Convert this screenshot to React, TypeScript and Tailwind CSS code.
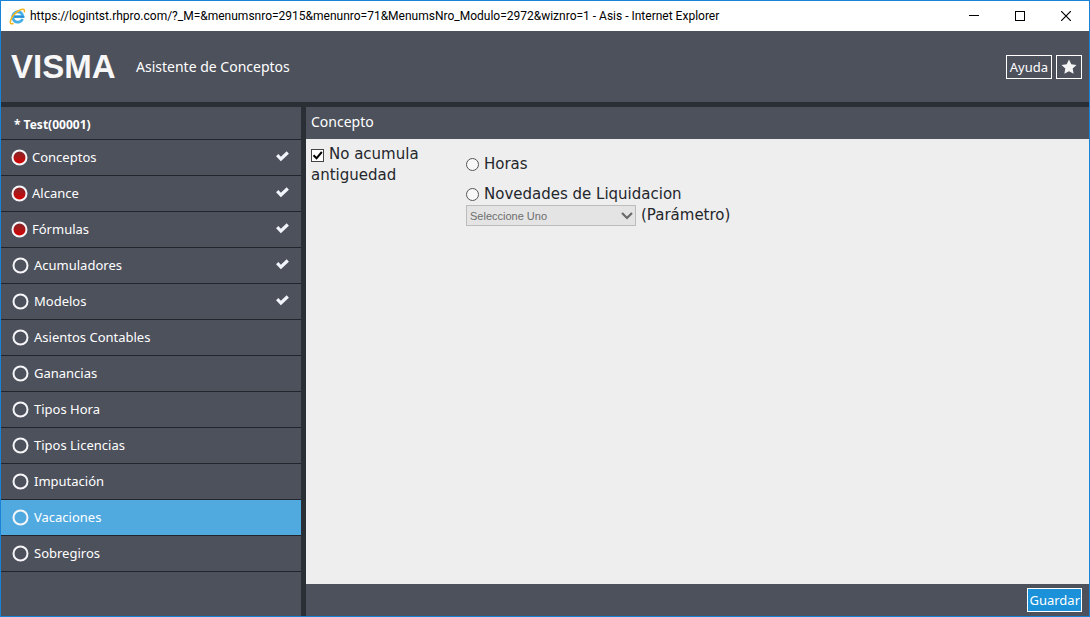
import { useState } from 'react';

interface Step {
  label: string;
  required?: boolean;
  done?: boolean;
}

const steps: Step[] = [
  { label: 'Conceptos', required: true, done: true },
  { label: 'Alcance', required: true, done: true },
  { label: 'Fórmulas', required: true, done: true },
  { label: 'Acumuladores', done: true },
  { label: 'Modelos', done: true },
  { label: 'Asientos Contables' },
  { label: 'Ganancias' },
  { label: 'Tipos Hora' },
  { label: 'Tipos Licencias' },
  { label: 'Imputación' },
  { label: 'Vacaciones' },
  { label: 'Sobregiros' },
];

function BrowserIcon() {
  return (
    <svg width="17" height="17" viewBox="0 0 17 17" fill="none" aria-hidden="true">
      <path d="M13.6 11A5.200 5.200 0 1 1 14 8.700H5" stroke="#45aee6" strokeWidth="2.8" />
      <path d="M5 8.700h10.200" stroke="#2b8fd2" strokeWidth="1.8" />
      <path
        d="M4.500 15.300c-2.500 1.200-3.900.2-2.800-3C2.900 8.600 7 4 11 2c3.300-1.600 5.200-.8 4.200 2.400"
        stroke="#f3b61f"
        strokeWidth="1.5"
      />
    </svg>
  );
}

function StepDot({ required }: { required?: boolean }) {
  return (
    <svg width="17" height="17" viewBox="0 0 17 17" aria-hidden="true" className="shrink-0">
      <defs>
        <linearGradient id="dot-red" x1="0" y1="0" x2="0" y2="1">
          <stop offset="0" stopColor="#7e2a2e" />
          <stop offset="1" stopColor="#dd0000" />
        </linearGradient>
      </defs>
      <circle
        cx="8.5"
        cy="8.5"
        r="7"
        fill={required ? 'url(#dot-red)' : 'none'}
        stroke="#f6f6f8"
        strokeWidth="2"
      />
    </svg>
  );
}

function TitleBar() {
  return (
    <div className="flex h-[30px] shrink-0 items-center bg-white pl-2 text-black">
      <BrowserIcon />
      <p className="ml-1 flex-1 truncate font-['Roboto',sans-serif] text-[12px]">
        https://logintst.rhpro.com/?_M=&amp;menumsnro=2915&amp;menunro=71&amp;MenumsNro_Modulo=2972&amp;wiznro=1 - Asis - Internet Explorer
      </p>
      <div className="flex h-full">
        <button aria-label="Minimizar" className="flex w-[46px] items-center justify-center">
          <svg width="10" height="10" viewBox="0 0 10 10" shapeRendering="crispEdges">
            <path d="M0 4.5h10" stroke="#000" />
          </svg>
        </button>
        <button aria-label="Maximizar" className="flex w-[46px] items-center justify-center">
          <svg width="10" height="10" viewBox="0 0 10 10">
            <rect x="0.5" y="0.5" width="9" height="9" fill="none" stroke="#000" />
          </svg>
        </button>
        <button aria-label="Cerrar" className="flex w-[46px] items-center justify-center">
          <svg width="10" height="10" viewBox="0 0 10 10">
            <path d="M0 0l10 10M10 0L0 10" stroke="#000" strokeWidth="1.2" />
          </svg>
        </button>
      </div>
    </div>
  );
}

function Header() {
  return (
    <header className="flex h-[71px] shrink-0 items-center pr-[7px] pl-[10px] text-white">
      <p className="w-[125px] font-['Liberation_Sans',sans-serif] text-[33px] leading-10 font-bold text-[#f7f7f8]">
        VISMA
      </p>
      <h1 className="flex-1 font-['Noto_Sans',sans-serif] text-[14px]">Asistente de Conceptos</h1>
      <div className="flex gap-1">
        <button className="h-6 border border-white px-[3px] font-['Noto_Sans',sans-serif] text-[13px] leading-5">
          Ayuda
        </button>
        <button aria-label="Favoritos" className="flex h-6 w-[26px] items-center justify-center border border-white">
          <svg width="16" height="16" viewBox="0 0 16 16" fill="#f4f4f4">
            <path d="M8 .5l2.3 4.8 5.2.7-3.8 3.6.9 5.2L8 12.3l-4.6 2.5.9-5.2L.5 6l5.2-.7z" />
          </svg>
        </button>
      </div>
    </header>
  );
}

function Sidebar({ active, onSelect }: { active: string; onSelect: (label: string) => void }) {
  return (
    <aside className="w-[300px] shrink-0 bg-[#4d515c] font-['Noto_Sans',sans-serif] text-[13px] text-white">
      <p className="flex h-[33px] items-center border-b border-[#22252b] pt-1 pl-[13px] text-[12px] font-bold">
        * Test(00001)
      </p>
      <nav>
        {steps.map((step) => (
          <button
            key={step.label}
            onClick={() => onSelect(step.label)}
            className={`flex h-9 w-full items-center border-b border-[#22252b] pr-3 text-left ${
              step.required ? 'gap-1 pl-[10px]' : 'gap-[5px] pl-[11px]'
            } ${step.label === active ? 'bg-[#50aae0]' : ''}`}
          >
            <StepDot required={step.required} />
            <span className="flex-1">{step.label}</span>
            {step.done && (
              <svg width="13" height="12" viewBox="0 0 13 12" fill="none" aria-hidden="true" className="mb-[3px]">
                <path d="M1.2 5.200l3.700 3.800L11.800 2.500" stroke="#f2f4fb" strokeWidth="3.200" />
              </svg>
            )}
          </button>
        ))}
      </nav>
    </aside>
  );
}

function RadioOption({ label }: { label: string }) {
  return (
    <label className="flex h-[21px] items-center gap-[5px]">
      <input
        type="radio"
        name="tipo"
        className="size-[13px] appearance-none rounded-full border border-[#555] bg-white/60 checked:border-4"
      />
      {label}
    </label>
  );
}

function ConceptForm() {
  const [skipSeniority, setSkipSeniority] = useState(true);

  return (
    <form className="flex flex-1 items-start bg-[#eeeeee] pt-[5px] pl-[5px] font-['DejaVu_Sans',sans-serif] text-[15px] leading-[21px] text-[#24272c]">
      <label className="w-[155px] pr-8">
        <span className="mr-[5px] inline-grid align-[-3px]">
          <input
            type="checkbox"
            checked={skipSeniority}
            onChange={(e) => setSkipSeniority(e.target.checked)}
            className="col-start-1 row-start-1 size-[13px] appearance-none border border-[#444] bg-white"
          />
          {skipSeniority && (
            <svg width="13" height="13" viewBox="0 0 13 13" fill="none" className="pointer-events-none col-start-1 row-start-1">
              <path d="M2.5 6.3l3 3L10.8 3" stroke="#000" strokeWidth="2" />
            </svg>
          )}
        </span>
        No acumula antiguedad
      </label>
      <div className="pt-[10px]">
        <RadioOption label="Horas" />
        <div className="pt-[9px]">
          <RadioOption label="Novedades de Liquidacion" />
        </div>
        <div className="flex items-center gap-[5px]">
          <div className="grid">
            <select
              id="parametro"
              disabled
              className="col-start-1 row-start-1 h-[21px] w-[170px] appearance-none border border-[#bcbcbc] bg-[#e4e4e4] pl-[3px] font-['Liberation_Sans',sans-serif] text-[11px] text-[#6d6d6d] opacity-100"
            >
              <option>Seleccione Uno</option>
            </select>
            <svg
              width="12"
              height="8"
              viewBox="0 0 12 8"
              fill="none"
              className="pointer-events-none col-start-1 row-start-1 mr-[3px] self-center justify-self-end"
            >
              <path d="M1 1l5 5 5-5" stroke="#6a6a6a" strokeWidth="2.2" />
            </svg>
          </div>
          <label htmlFor="parametro">(Parámetro)</label>
        </div>
      </div>
    </form>
  );
}

export default function App() {
  const [active, setActive] = useState('Vacaciones');

  return (
    <div className="flex min-h-screen flex-col border border-[#1883d7] bg-[#4d515c]">
      <TitleBar />
      <Header />
      <div className="flex flex-1 gap-[5px] border-t-5 border-[#2a2e35] bg-[#2a2e35]">
        <Sidebar active={active} onSelect={setActive} />
        <main className="flex flex-1 flex-col bg-[#4d515c] font-['Noto_Sans',sans-serif] text-white">
          <h2 className="h-8 pl-[5px] text-[14px] leading-[30px]">Concepto</h2>
          <ConceptForm />
          <footer className="flex h-8 items-center justify-end pr-[7px]">
            <button className="h-6 border border-white bg-[#1a91d8] px-px text-[13px] leading-[22px]">Guardar</button>
          </footer>
        </main>
      </div>
    </div>
  );
}
